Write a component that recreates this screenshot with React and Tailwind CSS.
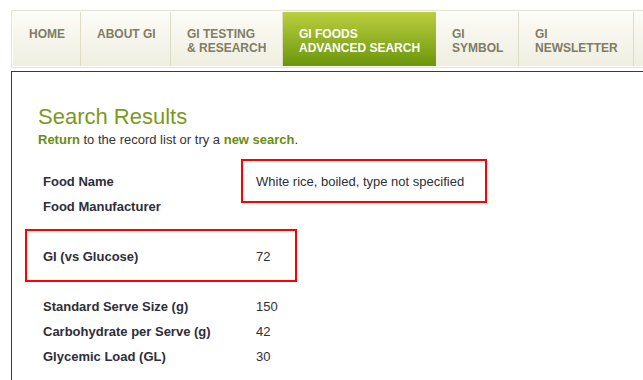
import React from 'react';

const navItems = [
  { lines: ['HOME'], w: 'w-[68px]' },
  { lines: ['ABOUT GI'], w: 'w-[90px]' },
  { lines: ['GI TESTING', '& RESEARCH'], w: 'w-[112px]' },
  { lines: ['GI FOODS', 'ADVANCED SEARCH'], w: 'w-[153px]', active: true },
  { lines: ['GI', 'SYMBOL'], w: 'w-[83px]' },
  { lines: ['GI', 'NEWSLETTER'], w: 'w-[115px]' },
  { lines: [''], w: 'w-[60px]' },
];

const rows = [
  { label: 'Food Name', value: 'White rice, boiled, type not specified' },
  { label: 'Food Manufacturer', value: '' },
  null,
  { label: 'GI (vs Glucose)', value: '72' },
  null,
  { label: 'Standard Serve Size (g)', value: '150' },
  { label: 'Carbohydrate per Serve (g)', value: '42' },
  { label: 'Glycemic Load (GL)', value: '30' },
];

const App = () => {
  return (
    <div className="relative w-[643px] h-[380px] overflow-hidden bg-white font-['Liberation_Sans',Arial,sans-serif]">
      {/* top menu */}
      <div className="pt-[10px] pl-[11px]">
        <div className="flex w-[720px] border border-[#e4e4d2] p-px">
          {navItems.map((item, i) => (
            <div
              key={i}
              className={
                'shrink-0 h-[54px] pl-[16px] pt-[15px] text-[12px] leading-[14px] font-bold ' +
                item.w +
                (item.active
                  ? ' bg-gradient-to-b from-[#bccf3e] to-[#6b9606] text-white'
                  : ' bg-gradient-to-b from-[#fcfcf7] to-[#efeee0] text-[#807c66] border-r border-[#dedcc6]')
              }
            >
              {item.lines.map((l, j) => (
                <div key={j}>{l}</div>
              ))}
            </div>
          ))}
        </div>
      </div>

      {/* content box */}
      <div className="mt-[3px] ml-[11px] h-[400px] border-t border-l border-[#3a3a3a] pl-[26px] pt-[32px]">
        <h1 className="text-[22px] leading-[26px] text-[#7a9a1c]">Search Results</h1>
        <p className="mt-px text-[13px] leading-[18px] text-[#333]">
          <span className="font-bold text-[#6a8c10]">Return</span> to the record list or try a{' '}
          <span className="font-bold text-[#6a8c10]">new search</span>.
        </p>

        <div className="mt-[20px] pl-[5px] text-[13px] text-[#2e2e38]">
          {rows.map((r, i) => (
            <div key={i} className="flex h-[25px] items-center">
              {r && (
                <>
                  <div className="w-[213px] font-bold">{r.label}</div>
                  <div>{r.value}</div>
                </>
              )}
            </div>
          ))}
        </div>
      </div>

      {/* red annotation boxes */}
      <div className="absolute left-[241px] top-[159px] w-[246px] h-[44px] border-2 border-[#ff0000]" />
      <div className="absolute left-[25px] top-[229px] w-[272px] h-[53px] border-2 border-[#ff0000]" />
    </div>
  );
};

export default App;
